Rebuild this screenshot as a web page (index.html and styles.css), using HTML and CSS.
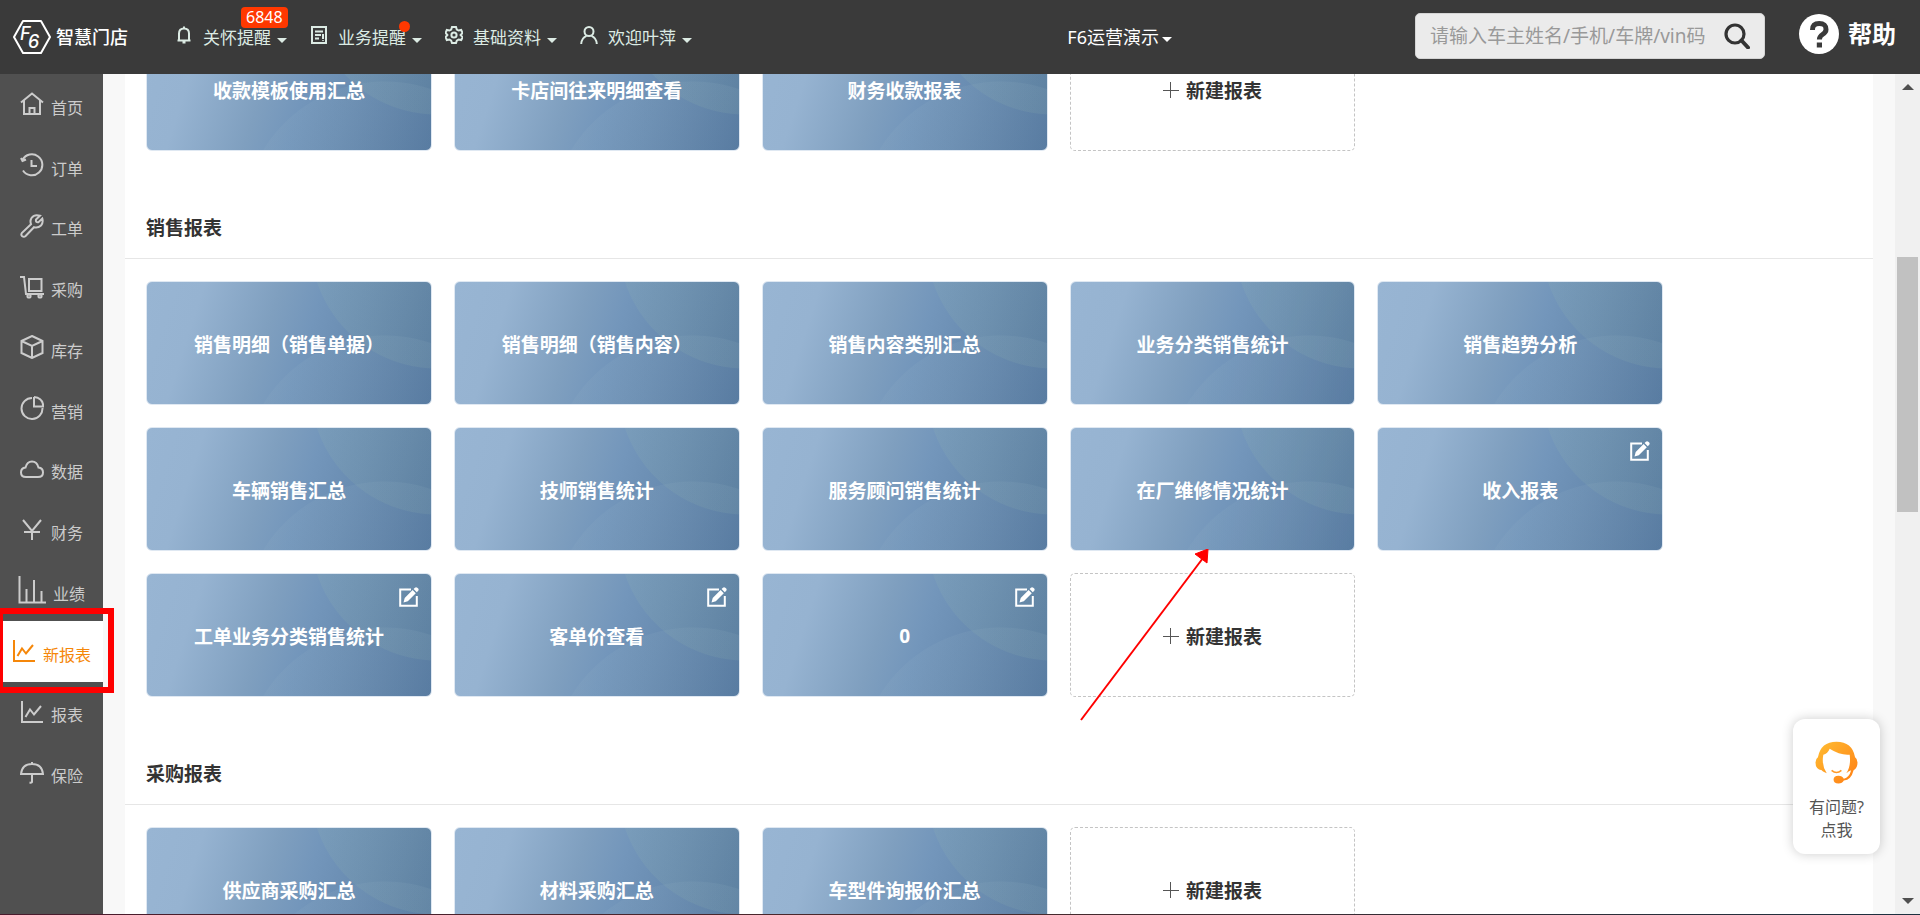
FILE: index.html
```html
<!DOCTYPE html>
<html lang="zh-CN">
<head>
<meta charset="utf-8">
<title>F6智慧门店 - 新报表</title>
<link rel="stylesheet" href="styles.css">
</head>
<body>
<svg class="sprite" aria-hidden="true">
  <symbol id="edit" viewBox="0 0 20 20"><path d="M12 2.5H1.2V18.8H17.8V9" fill="none" stroke="#fff" stroke-width="2"/><path d="M4.5 15.5l1.2-4.6L13.6 3l3.2 3.2-8 8zM14.6 2l1.3-1.3q1.2-1 2.4 0l.9.9q.9 1.2 0 2.2L17.800 5.200z" fill="#fff"/></symbol>
  <symbol id="plus" viewBox="0 0 16 16"><path d="M7.500 0v16M0 8.500h16" stroke="#555" fill="none"/></symbol>
</svg>
<header class="topbar">
  <a class="brand" href="#">
    <svg class="brand-mark" viewBox="0 0 38 34" aria-hidden="true"><path d="M10 1H28L37 17 28 33H10L1 17Z" fill="none" stroke="#fff" stroke-width="2" stroke-linejoin="round"/><text class="mark-letter" x="7" y="20">F</text><text class="mark-letter" x="15" y="28">6</text></svg>
    <span class="brand-name">智慧门店</span>
  </a>
  <nav class="menu" aria-label="顶部菜单">
    <button class="menu-item"><svg viewBox="0 0 18 18"><path d="M2.500 14.500H15.500M4 14V7.500Q4 2.500 9 2.500T14 7.500V14M9 .5V2.500M7.500 16.500H10.500"/></svg><span>关怀提醒</span><i class="caret"></i><em class="badge">6848</em></button>
    <button class="menu-item"><svg viewBox="0 0 18 18"><path d="M2 1H16V17H2ZM5 5.500H13M5 9H11M5 12.500H9M13 8V13M13 14.200V15"/></svg><span>业务提醒</span><i class="caret"></i><em class="dot"></em></button>
    <button class="menu-item"><svg viewBox="0 0 18 18"><path d="M7 1H11L11.800 3.500 13.600 4.500 16.200 4 17.600 7 15.600 9 17.600 11.200 16.200 14 13.600 13.500 11.800 14.600 11 17H7L6.200 14.600 4.400 13.500 1.800 14 .6 11.200 2.400 9 .6 7 1.800 4 4.400 4.500 6.200 3.500Z"/><circle cx="9" cy="9" r="2.600"/></svg><span>基础资料</span><i class="caret"></i></button>
    <button class="menu-item"><svg viewBox="0 0 18 18"><circle cx="9" cy="5.500" r="4.500"/><path d="M1.200 18Q1.500 12 6.500 9.800M16.800 18Q16.500 12 11.500 9.800"/></svg><span>欢迎叶萍</span><i class="caret"></i></button>
  </nav>
  <button class="store">F6运营演示<i class="caret"></i></button>
  <form class="search" role="search">
    <input type="text" aria-label="搜索" placeholder="请输入车主姓名/手机/车牌/vin码">
    <button type="button" aria-label="搜索"><svg viewBox="0 0 26 26"><circle cx="11" cy="11" r="9" fill="none" stroke="#333" stroke-width="3.200"/><path d="M17.500 17.500L24 24.500" stroke="#333" stroke-width="4" stroke-linecap="round"/></svg></button>
  </form>
  <a class="help" href="#"><svg viewBox="0 0 40 40" aria-hidden="true"><circle cx="20" cy="20" r="20" fill="#fff"/><path d="M13.500 16Q13.200 9.500 20.200 9.500T27 15.500Q27 18.300 23.500 20.500 20.400 22.500 20.400 25.500" fill="none" stroke="#3a3a3a" stroke-width="5"/><path d="M17.800 28.500h5.200v5h-5.200z" fill="#3a3a3a"/></svg><span>帮助</span></a>
</header>
<div class="body">
  <nav class="side" aria-label="主导航">
    <ul>
      <li><a href="#"><svg viewBox="0 0 24 24"><path d="M1 10.500L12 1.500 23 10.500M4 8.500V22H20V8.500M9.500 22V16H14.500V22"/></svg><span>首页</span></a></li>
      <li><a href="#"><svg viewBox="0 0 24 24"><path d="M2.500 7A10.500 10.500 0 1 1 3 17.500M1 5L2.500 8 6 6.500M11.500 7V13H17"/></svg><span>订单</span></a></li>
      <li><a href="#"><svg viewBox="0 0 24 24"><path d="M20 1.800Q14.500 0 11.500 4 9.800 7 11 10.200L2 18.800Q.6 20.800 2.200 22.200 4 23.500 5.600 22L14 13.200Q18 14.300 21 11.500 23.500 8.500 22.300 4.500L18.500 8.200Q15.500 8.800 16 5.600Z"/></svg><span>工单</span></a></li>
      <li><a href="#"><svg viewBox="0 0 24 24"><path d="M0 2H4L6 19H24M9 4H21.500V16H9Z"/><circle cx="9" cy="21" r="1.600"/><circle cx="20" cy="21" r="1.600"/></svg><span>采购</span></a></li>
      <li><a href="#"><svg viewBox="0 0 24 24"><path d="M12 1L22.500 6V18L12 23 1.500 18V6ZM1.500 6L12 11 22.500 6M12 11V23"/></svg><span>库存</span></a></li>
      <li><a href="#"><svg viewBox="0 0 24 24"><path d="M12 2A10.500 10.500 0 1 0 22.500 12M14 1V10.500H23.300Q23 2 14 1"/></svg><span>营销</span></a></li>
      <li><a href="#"><svg viewBox="0 0 24 24"><path d="M6 20Q1 20 1 15.500 1 11 5.500 10.500 7 4.500 12 4.500T18.500 10.500Q23 11 23 15.500 23 20 18 20Z"/></svg><span>数据</span></a></li>
      <li><a href="#"><svg viewBox="0 0 24 24"><path d="M3 2L12 13 21 2M4 14H20M12 13V22"/></svg><span>财务</span></a></li>
      <li><a href="#"><svg class="wide" viewBox="0 0 28 28"><path d="M1.500 0V26.500H28M8.500 26V13M16 26V4M23.500 26V15"/></svg><span>业绩</span></a></li>
      <li><a class="active" href="#" aria-current="page"><svg viewBox="0 0 24 24"><path d="M2 1V22H23M5.500 17L10 9.500 14 14.500 21 6"/></svg><span>新报表</span></a></li>
      <li><a href="#"><svg viewBox="0 0 24 24"><path d="M2 1V22H23M5.500 17L10 9.500 14 14.500 21 6"/></svg><span>报表</span></a></li>
      <li><a href="#"><svg viewBox="0 0 24 24"><path d="M1 13Q2 3 12 3T23 13ZM12 1V3M12 13V21Q12 22 9.500 21.500"/></svg><span>保险</span></a></li>
    </ul>
  </nav>
  <main class="page">
    <div class="panel">
      <section class="cards clipped">
        <div class="card"><a href="#">收款模板使用汇总</a></div>
        <div class="card"><a href="#">卡店间往来明细查看</a></div>
        <div class="card"><a href="#">财务收款报表</a></div>
        <button class="add"><svg><use href="#plus"/></svg>新建报表</button>
      </section>
      <h2>销售报表</h2>
      <section class="cards">
        <div class="card"><a href="#">销售明细（销售单据）</a></div>
        <div class="card"><a href="#">销售明细（销售内容）</a></div>
        <div class="card"><a href="#">销售内容类别汇总</a></div>
        <div class="card"><a href="#">业务分类销售统计</a></div>
        <div class="card"><a href="#">销售趋势分析</a></div>
        <div class="card"><a href="#">车辆销售汇总</a></div>
        <div class="card"><a href="#">技师销售统计</a></div>
        <div class="card"><a href="#">服务顾问销售统计</a></div>
        <div class="card"><a href="#">在厂维修情况统计</a></div>
        <div class="card"><a href="#">收入报表</a><button class="edit" aria-label="编辑"><svg><use href="#edit"/></svg></button></div>
        <div class="card"><a href="#">工单业务分类销售统计</a><button class="edit" aria-label="编辑"><svg><use href="#edit"/></svg></button></div>
        <div class="card"><a href="#">客单价查看</a><button class="edit" aria-label="编辑"><svg><use href="#edit"/></svg></button></div>
        <div class="card"><a href="#">0</a><button class="edit" aria-label="编辑"><svg><use href="#edit"/></svg></button></div>
        <button class="add"><svg><use href="#plus"/></svg>新建报表</button>
      </section>
      <h2>采购报表</h2>
      <section class="cards">
        <div class="card"><a href="#">供应商采购汇总</a></div>
        <div class="card"><a href="#">材料采购汇总</a></div>
        <div class="card"><a href="#">车型件询报价汇总</a></div>
        <button class="add"><svg><use href="#plus"/></svg>新建报表</button>
      </section>
    </div>
  </main>
  <div class="scrollbar" aria-hidden="true"><i class="up"></i><i class="thumb"></i><i class="down"></i></div>
</div>
<div class="edge"></div>
<div class="frame"></div>
<svg class="arrow" viewBox="0 0 130 172" aria-hidden="true"><path d="M1 171L123 9" stroke="#f00" stroke-width="2"/><path d="M128 0L127 14 115 5Z" fill="#f00" stroke="#f00"/></svg>
<button class="service">
  <svg viewBox="0 0 44 44" aria-hidden="true"><defs><linearGradient id="hair" x1="0" y1="0" x2="1" y2="1"><stop offset="0" stop-color="#ffbe32"/><stop offset="1" stop-color="#ff7d14"/></linearGradient></defs><path d="M12 33Q7 31 7 30 .5 29 .5 22 .5 18 3 16.500 6 .8 22 .8T41 16.500Q43.500 18 43.500 22 43.500 28 39.500 30 37 40 29.500 40.500 28 43.500 24 43.500 19 43.500 19 39.500 19 35.500 24 35.500 28 35.500 29.500 38.500 35 37.500 37 30 35 30.500 32 33 37 26 35.500 14 26 15 15 8 13 13 8.500 14 6.500 25 12 33Z" fill="url(#hair)"/><path d="M17 30Q22 34.500 27 30" fill="none" stroke="#ff9a28" stroke-width="1.600"/></svg>
  <span>有问题?<br>点我</span>
</button>
</body>
</html>
```
FILE: styles.css
```css
* { box-sizing: border-box; }
body {
  margin: 0;
  height: 100vh;
  display: flex;
  flex-direction: column;
  overflow: hidden;
  position: relative;
  background: #f8f8f8;
  color: #333;
  font-family: "Noto Sans", "Noto Sans CJK SC", sans-serif;
  font-size: 17px;
}
a { color: inherit; text-decoration: none; }
button { border: 0; padding: 0; background: none; color: inherit; font: inherit; cursor: pointer; }
.sprite { position: absolute; width: 0; height: 0; }

.topbar {
  flex: none;
  height: 74px;
  display: flex;
  align-items: center;
  padding: 0 24px 0 13px;
  background: #3a3a3a;
  color: #fff;
}
.brand { display: flex; align-items: center; gap: 5px; }
.brand-mark { width: 38px; height: 34px; }
.mark-letter { fill: #fff; font: italic 500 18px Inter, sans-serif; }
.brand-name { font-size: 18px; font-weight: 500; line-height: 24px; }
.menu { display: flex; gap: 23px; margin-left: 47px; color: #dcebe4; }
.menu-item { position: relative; display: flex; align-items: center; padding-top: 2px; line-height: 24px; white-space: nowrap; }
.menu-item svg { width: 18px; height: 18px; margin-right: 10px; margin-bottom: 6px; fill: none; stroke: currentColor; stroke-width: 2; }
.caret { border: 5px solid transparent; border-top-color: currentColor; border-bottom: 0; margin-left: 6px; margin-top: 4px; }
.badge {
  position: absolute;
  top: -17px;
  left: 66px;
  padding: 0 5px;
  border-radius: 4px;
  background: #ff3800;
  color: #fff;
  font-size: 16px;
  font-style: normal;
  line-height: 21px;
}
.dot { position: absolute; top: -3px; left: 89px; width: 11px; height: 11px; border-radius: 50%; background: #ff3800; }
.store { display: flex; align-items: center; margin-left: auto; font-size: 18px; line-height: 24px; }
.store .caret { margin-left: 3px; }
.search {
  display: flex;
  align-items: center;
  width: 350px;
  height: 46px;
  margin: 0 0 2px 243px;
  padding: 0 14px;
  border: 1px solid #d4d4d4;
  border-radius: 5px;
  background: #ebebeb;
}
.search input { flex: 1; min-width: 0; padding: 0; border: 0; outline: 0; background: none; font: inherit; font-size: 19px; }
.search input::placeholder { color: #999; opacity: 1; }
.search button svg { display: block; width: 26px; height: 26px; }
.help { display: flex; align-items: center; gap: 9px; margin-left: 34px; padding-bottom: 7px; font-size: 24px; font-weight: 700; line-height: 36px; }
.help svg { width: 40px; height: 40px; }

.body { flex: 1; min-height: 0; display: flex; }
.side { flex: none; width: 103px; background: #505050; color: #ccc; font-size: 16px; }
.side ul { display: grid; grid-template-rows: repeat(12, 1fr); height: 729px; margin: 0; padding: 0; list-style: none; }
.side a { display: flex; align-items: center; justify-content: center; gap: 7px; height: 100%; line-height: 24px; }
.side span { padding-top: 7px; }
.side svg { width: 24px; height: 24px; fill: none; stroke: currentColor; stroke-width: 2; }
.side .wide { width: 28px; height: 28px; }
.side .active { background: #fff; color: #f5870a; }

.page { flex: 1; min-width: 0; padding: 0 22px; overflow: hidden; }
.panel { min-height: 100%; background: #fff; }
.cards {
  display: grid;
  grid-template-columns: repeat(5, 1fr);
  grid-auto-rows: 124px;
  gap: 22px;
  padding: 22px 12% 0 21px;
}
.clipped { margin-top: -69px; }
h2 { margin: 63px 0 0; padding: 0 21px 16px; border-bottom: 1px solid #e6e6e6; font-size: 19px; font-weight: 700; line-height: 28px; }
.card {
  position: relative;
  display: grid;
  border: 1px solid #dfe8f2;
  border-radius: 6px;
  background:
    radial-gradient(circle at 290px -40px, rgba(150, 185, 175, .14) 126px, transparent 127px),
    radial-gradient(circle at 238px 196px, rgba(150, 180, 200, .12) 142px, transparent 143px),
    linear-gradient(108deg, #98b5d3 0%, #96b3d1 18%, #7f9fbf 42%, #7396bb 55%, #698cb1 70%, #5e81a7 84%, #50749c 100%);
  color: #fff;
  font-size: 19px;
  font-weight: 700;
}
.card a { display: flex; align-items: center; justify-content: center; padding-top: 2px; }
.edit { position: absolute; top: 13px; right: 12px; width: 20px; height: 20px; }
.edit svg { display: block; width: 20px; height: 20px; }
.add {
  display: flex;
  align-items: center;
  justify-content: center;
  gap: 7px;
  padding-top: 2px;
  border: 1px dashed #c4c4c4;
  border-radius: 5px;
  font-size: 19px;
  font-weight: 700;
}
.add svg { width: 16px; height: 16px; }

.scrollbar { flex: none; width: 25px; display: flex; flex-direction: column; align-items: center; padding: 10px 0; background: #f0f0f0; }
.up { border: 6px solid transparent; border-bottom-color: #505050; border-top: 0; }
.thumb { width: 21px; height: 255px; margin-top: 167px; background: #c1c1c1; }
.down { margin-top: auto; border: 6px solid transparent; border-top-color: #505050; border-bottom: 0; }
.edge { flex: none; height: 1px; background: linear-gradient(90deg, #4a1a2c, #4a2a2c 50%, #1c3040); }

.frame { position: absolute; left: -3px; top: 608px; width: 117px; height: 85px; border: 6px solid #f00; }
.arrow { position: absolute; left: 1080px; top: 549px; width: 130px; height: 172px; }
.service {
  position: absolute;
  right: 40px;
  bottom: 61px;
  display: flex;
  flex-direction: column;
  align-items: center;
  gap: 12px;
  width: 87px;
  padding: 22px 0 12px;
  border-radius: 12px;
  background: #fff;
  box-shadow: 0 0 12px rgba(0, 0, 0, .2);
  color: #555;
  font-size: 16px;
  line-height: 23px;
}
.service svg { width: 43px; height: 43px; }
```
